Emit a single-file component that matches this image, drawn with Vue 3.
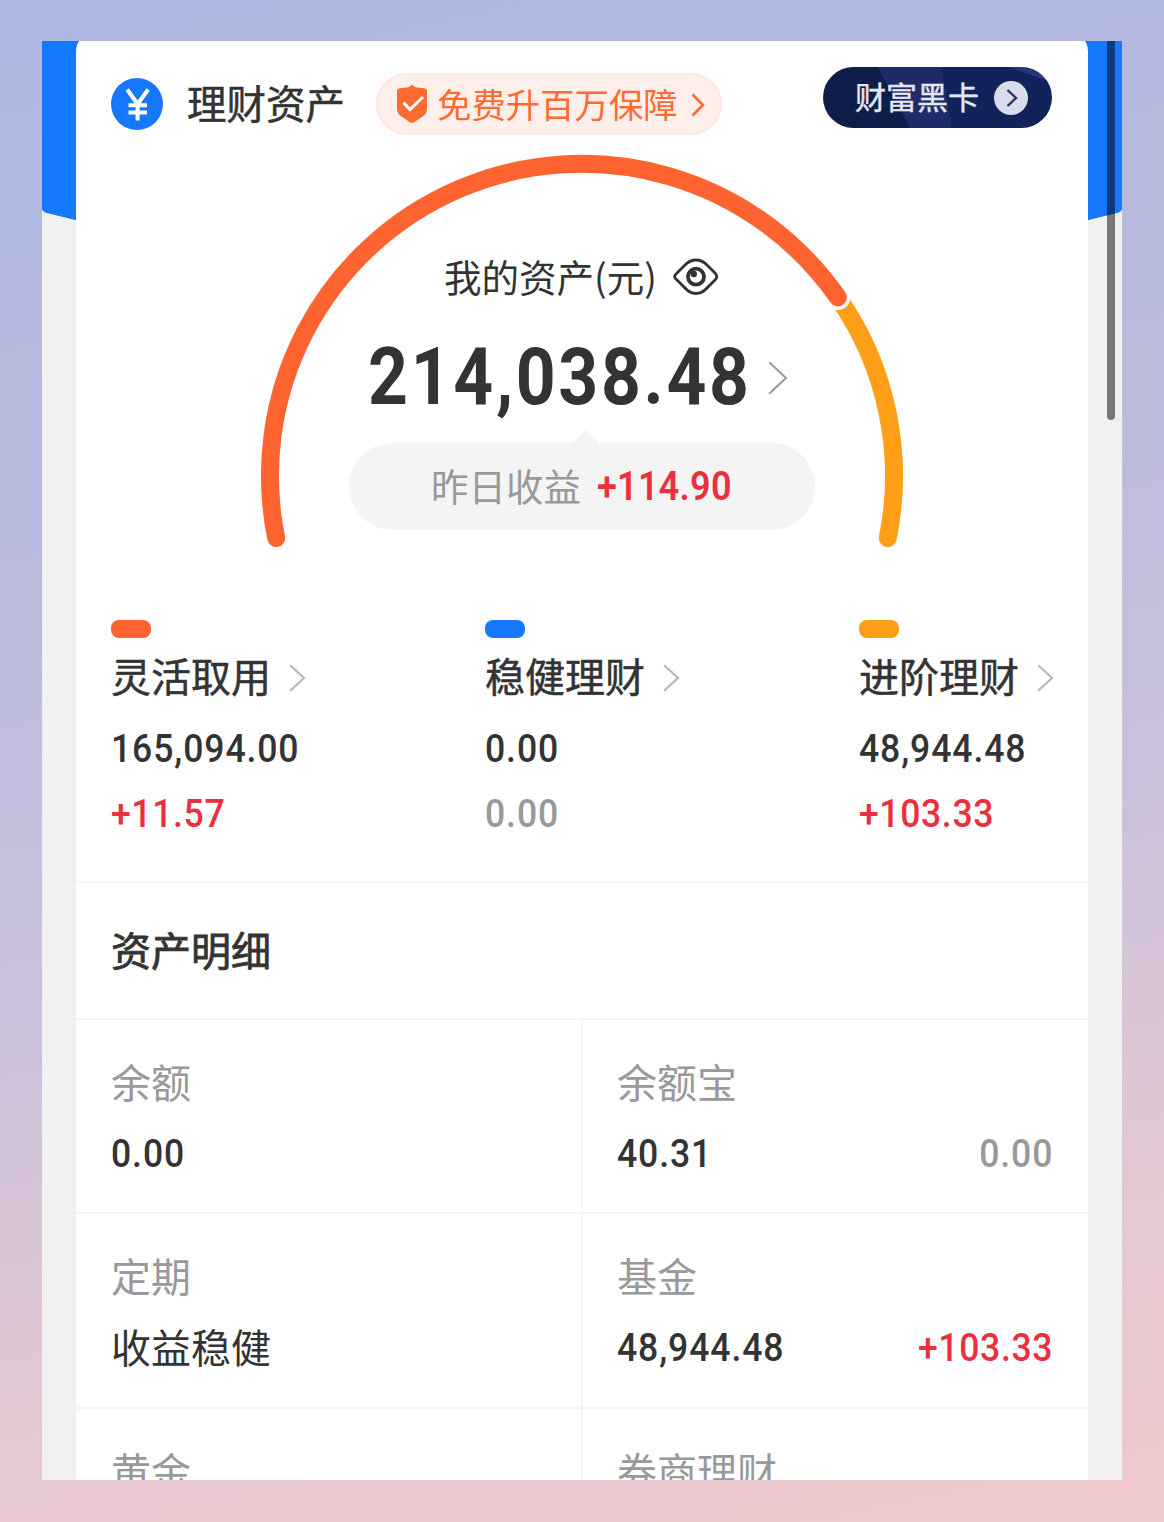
<script setup>
const groups = [
    { name: '灵活取用', color: 'orange', amount: '165,094.00', change: '+11.57' },
    { name: '稳健理财', color: 'blue', amount: '0.00', change: '0.00' },
    { name: '进阶理财', color: 'yellow', amount: '48,944.48', change: '+103.33' }
];

const details = [
    { name: '余额', value: '0.00' },
    { name: '余额宝', value: '40.31', change: '0.00' },
    { name: '定期', value: '收益稳健', isText: true },
    { name: '基金', value: '48,944.48', change: '+103.33' },
    { name: '黄金' },
    { name: '券商理财' }
];

const isGain = (value) => value.startsWith('+');
</script>

<template>
    <div class="page">
        <main class="screen">
            <svg class="banner" viewBox="0 0 1080 190" aria-hidden="true">
                <path d="M0 0H1080V168Q1079 171 1075 172Q810 240 540 240Q270 240 5 172Q1 171 0 168Z" fill="#1677ff" />
            </svg>

            <div class="card">
                <header class="header">
                    <svg class="coin" viewBox="0 0 52 52">
                        <circle cx="26" cy="26" r="26" fill="#1677ff" />
                        <path d="M16.2 11.5L26.6 26L37.2 11.5M26.6 25V42.5M17.5 27.2H36M17.5 34.4H36" fill="none" stroke="#fff" stroke-width="4" />
                    </svg>
                    <h1 class="title">理财资产</h1>
                    <button class="insurance">
                        <svg class="shield" viewBox="0 0 32 40">
                            <path d="M16 0.5Q17.5 2.7 20 3.2L29 4.6Q31 5 31 7V24Q31 29.5 26.5 32.6L19 37.8Q16 39.6 13 37.8L5.5 32.6Q1 29.5 1 24V7Q1 5 3 4.6L12 3.2Q14.5 2.7 16 0.5Z" fill="#ff6a30" />
                            <path d="M7.5 18.6L14 25.5L27 13" fill="none" stroke="#fff" stroke-width="3" />
                        </svg>
                        <span>免费升百万保障</span>
                        <svg class="insurance-arrow" viewBox="0 0 14 24">
                            <path d="M1.5 1.5L12 12L1.5 22.5" fill="none" stroke="#ff6a30" stroke-width="2.6" />
                        </svg>
                    </button>
                    <button class="black-card">
                        <span>财富黑卡</span>
                        <svg class="black-card-arrow" viewBox="0 0 34 34">
                            <circle cx="17" cy="17" r="17" fill="#d9dcec" />
                            <path d="M13.5 9L22 17L13.5 25" fill="none" stroke="#26315f" stroke-width="2.4" />
                        </svg>
                    </button>
                </header>

                <section class="gauge">
                    <svg class="arc" viewBox="0 0 642 393" aria-hidden="true">
                        <path d="M576.9 142.4A312 312 0 0 1 626.8 383" fill="none" stroke="#ff9f18" stroke-width="18" stroke-linecap="round" />
                        <circle cx="576.9" cy="142.4" r="12.5" fill="#fff" />
                        <path d="M15.2 383A312 312 0 0 1 576.9 142.4" fill="none" stroke="#ff6430" stroke-width="18" stroke-linecap="round" />
                    </svg>
                    <div class="gauge-label">
                        <span>我的资产(元)</span>
                        <svg class="eye" viewBox="0 0 48 38">
                            <path d="M2.5 18.5Q3 16.8 5 15L13 7Q18 2 24 2Q30 2 35 7L43 15Q46.5 18.5 43 22L35 30Q30 35.5 24 35.5Q18 35.5 13 30L5 22Q2.5 20 2.5 18.5Z" fill="none" stroke="#333" stroke-width="2.8" />
                            <circle cx="24" cy="18.7" r="8" fill="none" stroke="#333" stroke-width="3.8" />
                            <circle cx="21.8" cy="16" r="3.2" fill="#333" />
                        </svg>
                    </div>
                    <div class="total">
                        <span>214,038.48</span>
                        <svg class="total-arrow" viewBox="0 0 20 34">
                            <path d="M1.2 1.2L18 17L1.2 32.8" fill="none" stroke="#999" stroke-width="2" />
                        </svg>
                    </div>
                    <div class="yesterday">
                        <span>昨日收益</span>
                        <strong>+114.90</strong>
                    </div>
                </section>

                <section class="groups">
                    <div v-for="group in groups" :key="group.name" class="group">
                        <i class="group-mark" :class="group.color"></i>
                        <div class="group-name">
                            <span>{{ group.name }}</span>
                            <svg class="group-arrow" viewBox="0 0 17 28">
                                <path d="M1.2 1.2L15 14L1.2 26.8" fill="none" stroke="#b8b8b8" stroke-width="2.2" />
                            </svg>
                        </div>
                        <div class="number">{{ group.amount }}</div>
                        <div class="number change" :class="{ gain: isGain(group.change) }">{{ group.change }}</div>
                    </div>
                </section>

                <h2 class="section-title">资产明细</h2>

                <section class="details">
                    <div v-for="item in details" :key="item.name" class="cell">
                        <div class="cell-name">{{ item.name }}</div>
                        <div class="cell-row">
                            <span :class="item.isText ? 'words' : 'number'">{{ item.value }}</span>
                            <span v-if="item.change" class="number change" :class="{ gain: isGain(item.change) }">{{ item.change }}</span>
                        </div>
                    </div>
                </section>
            </div>

            <div class="scrollbar"></div>
        </main>
    </div>
</template>

<style>
body {
    margin: 0;
}
</style>

<style scoped>
.page {
    box-sizing: border-box;
    height: 1522px;
    padding: 41px 42px 42px;
    background: linear-gradient(168deg, #adb8e2 0%, #b8badd 30%, #c9c0dc 56%, #dcc6d5 74%, #e9c9d1 87%, #f0c9cc 100%);
    font-family: "Noto Sans CJK SC", sans-serif;
    color: #333;
}

.screen {
    position: relative;
    height: 1439px;
    overflow: hidden;
    background: #f1f1f1;
}

.banner {
    position: absolute;
    top: 0;
    left: 0;
    width: 1080px;
    height: 190px;
}

.card {
    position: relative;
    margin: -8px 34px 0;
    padding-top: 8px;
    border-radius: 18px 18px 0 0;
    background: #fff;
}

.header {
    display: flex;
    align-items: center;
    box-sizing: border-box;
    height: 114px;
    padding: 12px 36px 0 34.5px;
}

.coin {
    width: 52px;
    height: 52px;
}

.title {
    margin: -4px 0 0 24.5px;
    font-size: 39.5px;
    font-weight: 400;
    line-height: 50px;
    -webkit-text-stroke: 0.5px #333;
}

button {
    box-sizing: border-box;
    display: flex;
    align-items: center;
    border: none;
    font-family: inherit;
    white-space: nowrap;
}

.insurance {
    width: 346px;
    height: 62px;
    margin-left: 31px;
    padding: 0 0 0 18px;
    border: 2px solid #fee8e1;
    border-radius: 31px;
    background: #feefea;
    color: #ff6a30;
    font-size: 34.4px;
}

.insurance span {
    margin-top: -2px;
}

.black-card span {
    margin-top: -5px;
}

.shield {
    width: 32px;
    height: 40px;
    margin-right: 9px;
}

.insurance-arrow {
    width: 14px;
    height: 24px;
    margin: 2px 0 0 13px;
}

.black-card {
    width: 229px;
    height: 61px;
    margin: 0 0 13px auto;
    padding: 0 0 0 32px;
    border-radius: 31px;
    background:
        linear-gradient(200deg, #27357a 0 17%, transparent 17.5%) right top / 80px 100% no-repeat,
        linear-gradient(80deg, transparent 0 53.5%, #11235a 54%),
        linear-gradient(62deg, #0f1d4a 0 33%, #1e2b68 33.5% 100%);
    color: #e3e6f3;
    font-size: 31px;
    -webkit-text-stroke: 0.4px #e3e6f3;
}

.black-card-arrow {
    width: 34px;
    height: 34px;
    margin-left: 15px;
}

.gauge {
    position: relative;
    display: flex;
    flex-direction: column;
    align-items: center;
    padding-top: 98px;
}

.arc {
    position: absolute;
    top: 0;
    left: 185px;
    width: 642px;
    height: 393px;
    overflow: visible;
}

.gauge-label {
    display: flex;
    align-items: center;
    height: 50px;
    font-size: 37.5px;
    line-height: 46px;
}

.gauge-label span {
    margin-top: -4px;
}

.eye {
    width: 48px;
    height: 38px;
    margin: -3px 0 0 15px;
}

.total {
    display: flex;
    align-items: center;
    height: 80px;
    margin: 34px 8px 0 0;
    font: 700 80px/80px Roboto, sans-serif;
    letter-spacing: 3.1px;
}

/* condensed digits */
.total span {
    margin-right: -57px;
    transform: scaleX(0.87);
    transform-origin: left;
}

.total-arrow {
    width: 20px;
    height: 34px;
    margin: 2px 0 0 15px;
}

.yesterday {
    position: relative;
    display: flex;
    align-items: center;
    box-sizing: border-box;
    width: 466px;
    height: 87px;
    margin-top: 26px;
    padding-left: 82px;
    border-radius: 44px;
    background: #f4f4f4;
    color: #999;
    font-size: 37.5px;
}

.yesterday::before {
    content: "";
    position: absolute;
    top: -13px;
    left: 223px;
    width: 28px;
    height: 14px;
    background: #f4f4f4;
    clip-path: polygon(50% 0, 100% 100%, 0 100%);
}

.yesterday span {
    margin-top: -4px;
}

.yesterday strong {
    margin-left: 16px;
    color: #eb2f3f;
    font-family: Roboto, sans-serif;
    font-size: 40px;
    font-weight: 600;
    letter-spacing: 0.3px;
    transform: scaleX(0.9);
    transform-origin: left;
}

.groups {
    display: grid;
    grid-template-columns: 374px 374px 1fr;
    padding: 90px 0 47px 35px;
}

.group-mark {
    display: block;
    width: 40px;
    height: 18px;
    border-radius: 8px;
}

.orange {
    background: #ff6430;
}

.blue {
    background: #1677ff;
}

.yellow {
    background: #ff9f18;
}

.group-name {
    display: flex;
    align-items: center;
    height: 50px;
    margin: 15px 0 26px;
    font-size: 40px;
    line-height: 50px;
    -webkit-text-stroke: 0.5px #333;
}

.group-name span {
    margin-top: -6px;
}

.group-arrow {
    width: 17px;
    height: 28px;
    margin-left: 18px;
}

.number {
    height: 40px;
    font: 500 39.5px/40px Roboto, sans-serif;
    letter-spacing: 1px;
    transform: scaleX(0.9);
    transform-origin: left;
}

.group .change {
    margin-top: 25px;
}

.change {
    color: #999;
}

.gain {
    color: #eb2f3f;
    letter-spacing: 0.7px;
}

.section-title {
    box-sizing: border-box;
    height: 139px;
    margin: 0;
    padding-left: 35px;
    border: solid #f4f4f4;
    border-width: 2px 0;
    font-size: 40px;
    font-weight: 400;
    line-height: 133px;
    -webkit-text-stroke: 0.8px #333;
}

.details {
    display: grid;
    grid-template-columns: 507px 505px;
    grid-auto-rows: 194.3px;
}

.cell {
    box-sizing: border-box;
    padding: 39px 36px 0 35px;
    border-bottom: 2px solid #f4f4f4;
}

.cell:nth-child(odd) {
    border-right: 2px solid #f6f6f6;
}

.cell:nth-child(even) {
    padding-left: 34px;
}

.cell-name {
    height: 50px;
    margin-bottom: 25px;
    color: #999;
    font-size: 40px;
    line-height: 45px;
}

.cell-row {
    display: flex;
    justify-content: space-between;
}

.cell-row .change {
    margin-right: -1px;
    transform-origin: right;
}

.words {
    font-size: 40px;
    line-height: 36px;
}

.scrollbar {
    position: absolute;
    top: 0;
    right: 7px;
    width: 8px;
    height: 379px;
    border-radius: 0 0 4px 4px;
    background: rgba(0, 0, 0, 0.5);
}
</style>
